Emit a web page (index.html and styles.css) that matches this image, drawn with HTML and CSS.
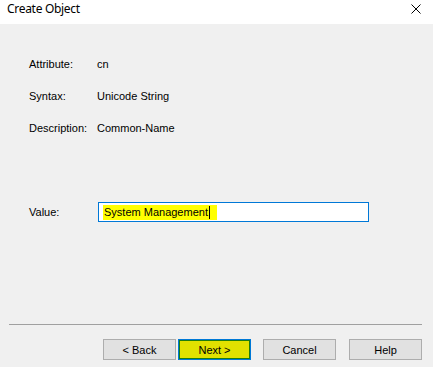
FILE: index.html
```html
<!DOCTYPE html>
<html>
<head>
<meta charset="utf-8">
<link rel="stylesheet" href="styles.css">
</head>
<body>
<div class="window">
  <div class="titlebar">
    <span class="title">Create Object</span>
    <svg class="close" width="10" height="10" viewBox="0 0 10 10"><path d="M0.5 0.5 L9.5 9.5 M9.5 0.5 L0.5 9.5" stroke="#000" stroke-width="1" fill="none"/></svg>
  </div>
  <div class="content">
    <div class="props">
      <span class="label">Attribute:</span><span class="val">cn</span>
      <span class="label">Syntax:</span><span class="val">Unicode String</span>
      <span class="label">Description:</span><span class="val">Common-Name</span>
    </div>
    <div class="value-row">
      <span class="label">Value:</span>
      <div class="input"><span class="hl">System Management<span class="caret"></span></span></div>
    </div>
  </div>
  <div class="sep"></div>
  <div class="buttons">
    <button class="btn">&lt; Back</button>
    <button class="btn next">Next &gt;</button>
    <button class="btn cancel">Cancel</button>
    <button class="btn help">Help</button>
  </div>
</div>
</body>
</html>
```
FILE: styles.css
```css
html, body {
  margin: 0;
  padding: 0;
  background: #f0f0f0;
}
.window {
  width: 433px;
  height: 367px;
  display: flex;
  flex-direction: column;
  font-family: "Liberation Sans", Arial, sans-serif;
  font-size: 11px;
  color: #000;
}
.titlebar {
  height: 24px;
  background: #fff;
  display: flex;
  justify-content: space-between;
  align-items: flex-start;
  padding: 0 12px 0 7px;
}
.title {
  font-family: "Noto Sans", sans-serif;
  font-size: 12px;
  letter-spacing: -0.3px;
  line-height: 16px;
  padding-top: 1px;
}
.close {
  margin-top: 4px;
  display: block;
}
.content {
  padding-left: 29px;
}
.props {
  margin-top: 34px;
  display: grid;
  grid-template-columns: 68px auto;
  row-gap: 19px;
  line-height: 13px;
}
.value-row {
  margin-top: 67px;
  display: flex;
  align-items: center;
  line-height: 13px;
}
.value-row .label {
  width: 69px;
}
.input {
  width: 265px;
  height: 18px;
  border: 1px solid #0078d7;
  background: #fff;
  display: flex;
  align-items: center;
  padding-left: 4px;
}
.hl {
  background: #ffff00;
  line-height: 15px;
  padding: 0 7px 0 1px;
  display: flex;
  align-items: center;
}
.caret {
  display: inline-block;
  width: 1px;
  height: 13px;
  background: #000;
  margin-left: 1px;
}
.sep {
  margin: 102px 11px 0 9px;
  height: 1px;
  background: #a0a0a0;
}
.buttons {
  margin-top: 14px;
  display: flex;
  justify-content: flex-end;
  padding-right: 11px;
}
.btn {
  width: 73px;
  height: 21px;
  box-sizing: border-box;
  border: 1px solid #adadad;
  background: #e1e1e1;
  font-family: "Liberation Sans", Arial, sans-serif;
  font-size: 11px;
  color: #000;
  padding: 0;
  margin: 0;
}
.next {
  margin-left: 2px;
  border-color: #0078d7;
  background: #e1e100;
  box-shadow: inset 0 0 0 1px #1c7c10;
}
.cancel {
  margin-left: 12px;
}
.help {
  margin-left: 13px;
}
```
